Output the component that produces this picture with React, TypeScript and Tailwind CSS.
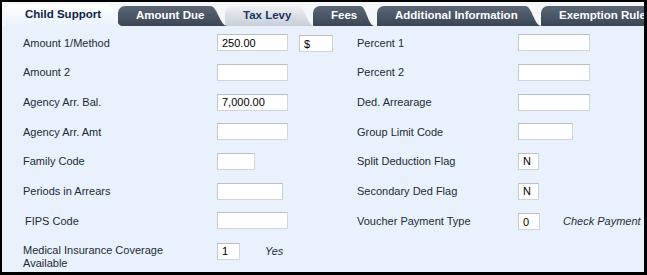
import type { ReactNode } from "react";

type Tab = { label: string; kind: "active" | "dark" | "light"; body: number; wing: number; ml: number };

const tabs: Tab[] = [
  { label: "Child Support", kind: "active", body: 103, wing: 14, ml: 3 },
  { label: "Amount Due", kind: "dark", body: 92, wing: 18, ml: -4 },
  { label: "Tax Levy", kind: "light", body: 73, wing: 17, ml: -3 },
  { label: "Fees", kind: "dark", body: 47, wing: 15, ml: -2 },
  { label: "Additional Information", kind: "dark", body: 148, wing: 17, ml: 2 },
  { label: "Exemption Rule", kind: "dark", body: 130, wing: 16, ml: -1 },
];

const stops = {
  active: ["#ffffff", "#e9f2fc"],
  dark: ["#5b6777", "#3a4656"],
  light: ["#eef0f3", "#c8cfd8"],
};

function TabItem({ tab, index }: { tab: Tab; index: number }) {
  const [top, bottom] = stops[tab.kind];
  const h = tab.kind === "active" ? 22 : 20;
  const gid = `tabgrad-${index}`;
  const bg =
    tab.kind === "active"
      ? "bg-gradient-to-b from-[#ffffff] to-[#e9f2fc] text-[#0f2346]"
      : tab.kind === "dark"
        ? "bg-gradient-to-b from-[#5b6777] to-[#3a4656] text-white"
        : "bg-gradient-to-b from-[#eef0f3] to-[#c8cfd8] text-[#1b3564]";
  const w = tab.wing;
  return (
    <div className="flex shrink-0 items-end" style={{ marginLeft: tab.ml, zIndex: 20 - index }}>
      <div
        className={`flex items-center rounded-tl-[7px] text-[11.5px] font-bold ${bg}`}
        style={{ width: tab.body, height: h, paddingLeft: tab.kind === "active" ? 20 : 18 }}
      >
        <span className="whitespace-nowrap">{tab.label}</span>
      </div>
      <svg width={w} height={h} viewBox={`0 0 ${w} ${h}`} className="block">
        <defs>
          <linearGradient id={gid} x1="0" y1="0" x2="0" y2="1">
            <stop offset="0" stopColor={top} />
            <stop offset="1" stopColor={bottom} />
          </linearGradient>
        </defs>
        <path d={`M0 0 C${w * 0.45} 0 ${w * 0.5} ${h} ${w} ${h} L0 ${h} Z`} fill={`url(#${gid})`} />
      </svg>
    </div>
  );
}

function Field({ w, value, className = "" }: { w: number; value?: string; className?: string }) {
  return (
    <div
      className={`flex h-[17px] shrink-0 items-center border border-[#d0d5db] border-t-[#b9c0c8] border-l-[#c3c9d0] bg-white pl-[4px] text-[11px] text-black ${className}`}
      style={{ width: w }}
    >
      {value}
    </div>
  );
}

function Note({ children, ml }: { children: ReactNode; ml: number }) {
  return (
    <span className="text-[11px] italic text-[#2a2f38]" style={{ marginLeft: ml }}>
      {children}
    </span>
  );
}

const rows: { left: ReactNode; leftField: ReactNode; right?: ReactNode; rightField?: ReactNode }[] = [
  {
    left: "Amount 1/Method",
    leftField: (
      <>
        <Field w={71} value="250.00" />
        <Field w={34} value="$" className="ml-[11px] mt-[2px]" />
      </>
    ),
    right: "Percent 1",
    rightField: <Field w={72} />,
  },
  { left: "Amount 2", leftField: <Field w={71} />, right: "Percent 2", rightField: <Field w={72} /> },
  {
    left: "Agency Arr. Bal.",
    leftField: <Field w={71} value="7,000.00" />,
    right: "Ded. Arrearage",
    rightField: <Field w={72} />,
  },
  { left: "Agency Arr. Amt", leftField: <Field w={71} />, right: "Group Limit Code", rightField: <Field w={55} /> },
  { left: "Family Code", leftField: <Field w={38} />, right: "Split Deduction Flag", rightField: <Field w={21} value="N" /> },
  {
    left: "Periods in Arrears",
    leftField: <Field w={66} />,
    right: "Secondary Ded Flag",
    rightField: <Field w={21} value="N" />,
  },
  {
    left: <span className="pl-[2px]">FIPS Code</span>,
    leftField: <Field w={71} />,
    right: "Voucher Payment Type",
    rightField: (
      <>
        <Field w={22} value="0" className="mt-[2px]" />
        <Note ml={23}>Check Payment</Note>
      </>
    ),
  },
];

export default function App() {
  return (
    <div className="h-[275px] w-[647px] bg-black pb-[3px] pl-[2px] pr-[3px] pt-[2px] font-['Liberation_Sans',Arial,sans-serif]">
      <div className="flex h-full flex-col overflow-hidden bg-[#e9f2fc]">
        <div className="flex h-[24px] shrink-0 items-end overflow-hidden bg-[#f4f6f8]">
          {tabs.map((t, i) => (
            <TabItem key={t.label} tab={t} index={i} />
          ))}
        </div>
        <div className="pl-[21px] pt-[2px] text-[11px] text-[#222a36]">
          {rows.map((r, i) => (
            <div key={i} className="grid h-[29.7px] grid-cols-[194px_140px_161px_1fr] items-center">
              <div className="whitespace-nowrap">{r.left}</div>
              <div className="flex items-center">{r.leftField}</div>
              <div className="whitespace-nowrap">{r.right}</div>
              <div className="flex items-center">{r.rightField}</div>
            </div>
          ))}
          <div className="grid grid-cols-[194px_140px_161px_1fr] items-start pt-[7px]">
            <div className="mt-[1px] leading-[13px]">
              Medical Insurance Coverage
              <br />
              Available
            </div>
            <div className="flex items-center">
              <Field w={23} value="1" />
              <Note ml={25}>Yes</Note>
            </div>
          </div>
        </div>
      </div>
    </div>
  );
}
